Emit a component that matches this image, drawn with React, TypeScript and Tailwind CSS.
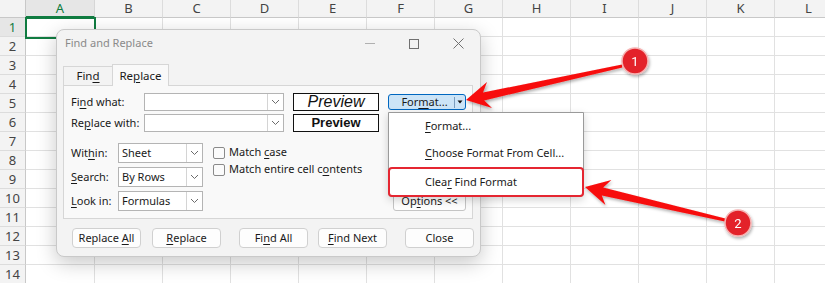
import React from "react";

const COLS = ["A", "B", "C", "D", "E", "F", "G", "H", "I", "J", "K", "L"];
const ROWS = Array.from({ length: 14 }, (_, i) => i + 1);
const FONT = { fontFamily: '"Noto Sans", "Open Sans", sans-serif' };

function U({ children }: { children: React.ReactNode }) {
  return <span className="underline underline-offset-2">{children}</span>;
}

function Chevron() {
  return (
    <svg width="9" height="6" viewBox="0 0 9 6" className="text-[#6b6b6b]">
      <polyline points="1,1 4.5,4.5 8,1" fill="none" stroke="currentColor" strokeWidth="1" />
    </svg>
  );
}

function Combo({ w, h, text }: { w: string; h: string; text?: string }) {
  return (
    <div className={`flex ${w} ${h} items-stretch border border-[#b4b4b4] bg-white`}>
      <div className="flex flex-1 items-center pl-[3px] text-[11px] text-[#1a1a1a]">{text}</div>
      <div className="flex w-[16px] items-center justify-center border-l border-[#d4d4d4]">
        <Chevron />
      </div>
    </div>
  );
}

function Check({ children }: { children: React.ReactNode }) {
  return (
    <div className="flex h-[17px] items-center gap-[4px]">
      <div className="h-[12px] w-[12px] rounded-[2px] border border-[#8a8a8a] bg-[#fbfbfb]" />
      <span className="text-[11px] text-[#1a1a1a]">{children}</span>
    </div>
  );
}

function Btn({ children }: { children: React.ReactNode }) {
  return (
    <div className="flex h-[20px] w-[69px] items-center justify-center rounded-[4px] border border-[#d0d0d0] bg-[#fdfdfd] text-[11px] text-[#1a1a1a]">
      <span>{children}</span>
    </div>
  );
}

function Grid() {
  return (
    <div className="flex flex-col leading-none">
      <div className="flex h-[18px]">
        <div className="w-[26px] shrink-0 border-b border-r border-[#c8c8c8] bg-[#f3f3f3]" />
        {COLS.map((c, i) => (
          <div
            key={c}
            className={`flex h-full shrink-0 items-center justify-center text-[13px] ${
              i === 0
                ? "w-[69px] border-b-2 border-r border-b-[#107c41] border-r-[#d6d6d6] bg-[#e6e6e6] text-[#107c41]"
                : "w-[68px] border-b border-r border-b-[#c8c8c8] border-r-[#dcdcdc] bg-[#f3f3f3] text-[#444]"
            }`}
          >
            {c}
          </div>
        ))}
      </div>
      {ROWS.map((r) => (
        <div key={r} className="flex h-[19px]">
          <div
            className={`flex w-[26px] shrink-0 items-center justify-center border-b border-r text-[13px] ${
              r === 1
                ? "border-b-[#dcdcdc] border-r-[#107c41] bg-[#e6e6e6] text-[#107c41]"
                : "border-b-[#dcdcdc] border-r-[#c8c8c8] bg-[#f3f3f3] text-[#444]"
            }`}
          >
            {r}
          </div>
          {COLS.map((c, i) => (
            <div
              key={c}
              className={`${i === 0 ? "w-[69px]" : "w-[68px]"} shrink-0 border-b border-r border-[#e1e1e1] bg-white`}
            />
          ))}
        </div>
      ))}
    </div>
  );
}

function Dialog() {
  return (
    <div className="absolute left-[56px] top-[29px] flex h-[228px] w-[425px] flex-col rounded-[8px] border border-[#c9c9c9] bg-[#f3f3f3] shadow-[0_6px_20px_rgba(0,0,0,0.22)]">
      <div className="flex h-[27px] shrink-0 items-center pl-[8px]">
        <span className="text-[11px] text-[#8a8a8a]">Find and Replace</span>
        <div className="ml-auto flex items-center">
          <div className="mr-[34px] h-px w-[10px] bg-[#b0b0b0]" />
          <div className="mr-[34px] h-[10px] w-[10px] border border-[#707070]" />
          <svg width="11" height="11" viewBox="0 0 11 11" className="mr-[16px]">
            <path d="M0.5 0.5 L10.5 10.5 M10.5 0.5 L0.5 10.5" stroke="#707070" strokeWidth="1" />
          </svg>
        </div>
      </div>
      <div className="mt-[7px] flex h-[21px] items-end pl-[6px]">
        <div className="flex h-[19px] w-[49px] items-center justify-center border-l border-t border-[#d6d6d6] text-[11.5px] text-[#1a1a1a]">
          <span>
            Fin<U>d</U>
          </span>
        </div>
        <div className="relative z-10 -mb-px flex h-[22px] w-[57px] items-center justify-center border-x border-t border-[#d6d6d6] bg-[#f9f9f9] text-[11.5px] text-[#1a1a1a]">
          <span>
            Re<U>p</U>lace
          </span>
        </div>
      </div>
      <div className="mx-[6px] mr-[7px] flex h-[134px] flex-col border border-[#d6d6d6] bg-[#f9f9f9] pl-[7px] pt-[7px] text-[#1a1a1a]">
        <div className="flex h-[18px] items-center">
          <span className="w-[73px] text-[11px]">
            Fi<U>n</U>d what:
          </span>
          <Combo w="w-[140px]" h="h-[18px]" />
          <div className="ml-[9px] flex h-[18px] w-[86px] items-center justify-center border-[1.5px] border-[#111] bg-white">
            <span className="text-[16px] italic text-[#111]" style={{ fontFamily: '"Liberation Sans", Arial, sans-serif' }}>
              Preview
            </span>
          </div>
          <div className="ml-[9px] flex h-[16px] w-[78px] items-center rounded-[3px] border border-[#0067c0] bg-[#cce4f7] text-[11px]">
            <span className="flex-1 pl-[6px] text-center">
              For<U>m</U>at...
            </span>
            <div className="h-[11px] w-px bg-[#7a9cbd]" />
            <svg width="10" height="6" viewBox="0 0 10 6">
              <polygon points="2.5,1.5 7.5,1.5 5,4.5" fill="#111" />
            </svg>
          </div>
        </div>
        <div className="mt-[3px] flex h-[18px] items-center">
          <span className="w-[73px] text-[11px]">
            Re<U>p</U>lace with:
          </span>
          <Combo w="w-[140px]" h="h-[18px]" />
          <div className="ml-[9px] flex h-[18px] w-[86px] items-center justify-center border-[1.5px] border-[#111] bg-white">
            <span className="text-[13px] font-bold text-[#111]" style={{ fontFamily: '"Liberation Sans", Arial, sans-serif' }}>
              Preview
            </span>
          </div>
        </div>
        <div className="mt-[11px] flex">
          <div className="flex flex-col gap-[4px]">
            {[
              { l: <>Wit<U>h</U>in:</>, t: "Sheet" },
              { l: <><U>S</U>earch:</>, t: "By Rows" },
              { l: <><U>L</U>ook in:</>, t: "Formulas" },
            ].map((r, i) => (
              <div key={i} className="flex items-center">
                <span className="w-[47px] text-[11px]">{r.l}</span>
                <Combo w="w-[85px]" h="h-[20px]" text={r.t} />
              </div>
            ))}
          </div>
          <div className="ml-[10px] mt-[1px] flex flex-col">
            <Check>
              Match <U>c</U>ase
            </Check>
            <Check>
              Match entire cell c<U>o</U>ntents
            </Check>
          </div>
          <div className="ml-auto mr-[6px] flex h-[20px] w-[73px] items-center justify-center self-end rounded-[3px] border border-[#c4c4c4] bg-[#fdfdfd] text-[11px]">
            <span>
              Op<U>t</U>ions &lt;&lt;
            </span>
          </div>
        </div>
      </div>
      <div className="mt-[9px] flex pl-[15px]">
        <Btn>
          Replace <U>A</U>ll
        </Btn>
        <div className="ml-[11px]">
          <Btn>
            <U>R</U>eplace
          </Btn>
        </div>
        <div className="ml-[18px]">
          <Btn>
            Fi<U>n</U>d All
          </Btn>
        </div>
        <div className="ml-[10px]">
          <Btn>
            <U>F</U>ind Next
          </Btn>
        </div>
        <div className="ml-[18px]">
          <Btn>Close</Btn>
        </div>
      </div>
    </div>
  );
}

function Menu() {
  return (
    <div className="absolute left-[388px] top-[112px] flex w-[196px] flex-col rounded-b-[4px] border border-[#9a9a9a] bg-white text-[11px] text-[#1a1a1a] shadow-[0_3px_8px_rgba(0,0,0,0.18)]">
      <div className="flex h-[27px] items-center pl-[36px]">
        <span>
          <U>F</U>ormat...
        </span>
      </div>
      <div className="flex h-[27px] items-center pl-[36px]">
        <span>
          <U>C</U>hoose Format From Cell...
        </span>
      </div>
      <div className="-mx-px -mb-px flex h-[30px] items-center rounded-[4px] border-2 border-[#e52631] pl-[35px]">
        <span>
          Clea<U>r</U> Find Format
        </span>
      </div>
    </div>
  );
}

function Badge({ cx, cy, n }: { cx: number; cy: number; n: string }) {
  return (
    <g filter="url(#sh)">
      <circle cx={cx} cy={cy} r="13" fill="#e3242b" stroke="#f6b3b3" strokeWidth="1.5" />
      <text x={cx} y={cy + 4.5} textAnchor="middle" fontSize="13" fill="#fff" style={{ fontFamily: '"Roboto", sans-serif' }}>
        {n}
      </text>
    </g>
  );
}

function Arrows() {
  return (
    <svg className="pointer-events-none absolute left-0 top-0" width="825" height="283">
      <defs>
        <filter id="sh" x="-50%" y="-50%" width="200%" height="200%">
          <feDropShadow dx="1" dy="2" stdDeviation="1.5" floodColor="#000" floodOpacity="0.3" />
        </filter>
      </defs>
      <g filter="url(#sh)">
        <polygon points="466,100 487,82 483,92.5 622,64.6 622.4,67.4 484.2,100.5 492,108" fill="#f70c0c" />
        <polygon points="585,187 611.4,180 603.2,187.6 725.3,218.6 724.7,221.4 601.8,195.4 605.4,205" fill="#f70c0c" />
      </g>
      <Badge cx={635} cy={61} n="1" />
      <Badge cx={738} cy={223} n="2" />
    </svg>
  );
}

export default function App() {
  return (
    <div className="relative h-[283px] w-[825px] overflow-hidden bg-white" style={FONT}>
      <Grid />
      <div className="absolute left-[25px] top-[17px] h-[22px] w-[71px] border-2 border-[#107c41]" />
      <Dialog />
      <Menu />
      <Arrows />
    </div>
  );
}
